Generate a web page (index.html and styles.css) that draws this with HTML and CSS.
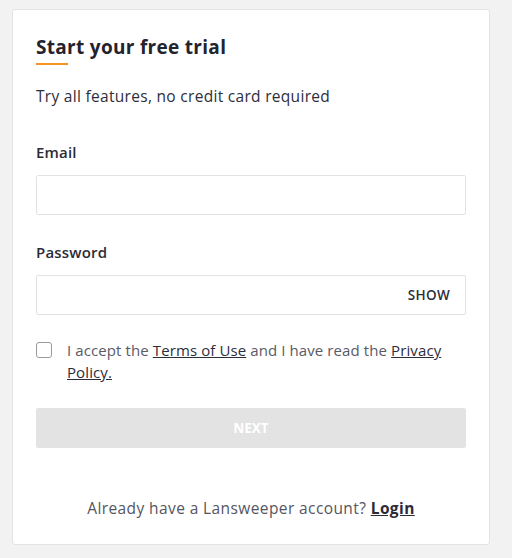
FILE: index.html
```html
<!DOCTYPE html>
<html>
<head>
<meta charset="utf-8">
<link rel="stylesheet" href="styles.css">
</head>
<body>
<div class="card">
  <h1 class="title">Start your free trial</h1>
  <div class="accent"></div>
  <p class="subtitle">Try all features, no credit card required</p>
  <form class="form">
    <div class="field">
      <label class="label">Email</label>
      <div class="input"></div>
    </div>
    <div class="field field-last">
      <label class="label">Password</label>
      <div class="input input-pw"><span class="show">SHOW</span></div>
    </div>
    <div class="consent">
      <span class="checkbox"></span>
      <span class="consent-text">I accept the <a class="link" href="#">Terms of Use</a> and I have read the <a class="link" href="#">Privacy Policy.</a></span>
    </div>
    <div class="btn">NEXT</div>
  </form>
  <p class="footer">Already have a Lansweeper account? <a class="login" href="#">Login</a></p>
</div>
</body>
</html>
```
FILE: styles.css
```css
html, body {
  margin: 0;
  padding: 0;
  background: #f2f2f2;
}
body {
  padding: 9px 22px 0 12px;
  font-family: "Open Sans", "Liberation Sans", sans-serif;
  color: #2b2b36;
}
.card {
  background: #fff;
  border: 1px solid #e3e3e3;
  border-radius: 3px;
  padding: 24px 23px 26px 23px;
  height: 484px;
}
.title {
  margin: 0;
  font-size: 19px;
  font-weight: 700;
  line-height: 26px;
  color: #23232e;
  letter-spacing: 0.3px;
}
.accent {
  width: 32px;
  height: 2px;
  background: #f7941d;
  margin-top: 3px;
}
.subtitle {
  margin: 20px 0 0 0;
  font-size: 15.5px;
  letter-spacing: 0.3px;
  line-height: 22px;
  color: #2e2e3a;
}
.form {
  margin-top: 35px;
}
.field {
  margin-bottom: 27px;
}
.field-last {
  margin-bottom: 24px;
}
.label {
  display: block;
  font-size: 15px;
  font-weight: 600;
  letter-spacing: 0.2px;
  line-height: 20px;
  color: #2b2b36;
}
.input {
  margin-top: 13px;
  height: 38px;
  border: 1px solid #e2e2e2;
  border-radius: 2px;
  display: flex;
  align-items: center;
  justify-content: flex-end;
  padding-right: 15px;
}
.show {
  font-size: 13.5px;
  font-weight: 600;
  letter-spacing: 0.3px;
  color: #2e2e3a;
}
.consent {
  display: flex;
  align-items: flex-start;
}
.checkbox {
  flex: none;
  width: 14px;
  height: 14px;
  border: 1px solid #9a9a9a;
  border-radius: 3px;
  margin-top: 3px;
  margin-right: 15px;
}
.consent-text {
  font-size: 15px;
  letter-spacing: 0.1px;
  line-height: 22px;
  color: #5a5a66;
}
.link {
  color: #2e2e3a;
  text-decoration: underline;
}
.btn {
  margin-top: 25px;
  height: 40px;
  background: #e3e3e3;
  border-radius: 2px;
  color: #fff;
  font-size: 13.5px;
  font-weight: 700;
  display: flex;
  align-items: center;
  justify-content: center;
}
.footer {
  margin: 49px 0 0 0;
  text-align: center;
  font-size: 15.5px;
  letter-spacing: 0.4px;
  line-height: 22px;
  color: #55555f;
}
.login {
  color: #2b2b36;
  font-weight: 700;
  text-decoration: underline;
}
```
